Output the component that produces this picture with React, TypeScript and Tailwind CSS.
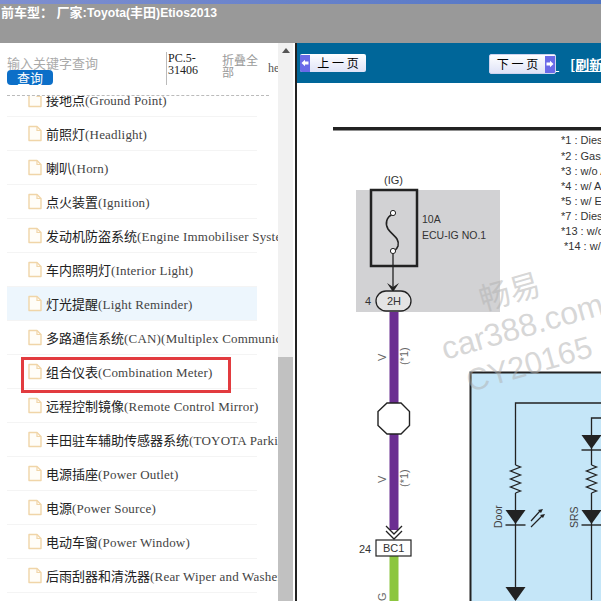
import React from "react";

const rows: [string, string][] = [
  ["接地点", "(Ground Point)"],
  ["前照灯", "(Headlight)"],
  ["喇叭", "(Horn)"],
  ["点火装置", "(Ignition)"],
  ["发动机防盗系统", "(Engine Immobiliser System)"],
  ["车内照明灯", "(Interior Light)"],
  ["灯光提醒", "(Light Reminder)"],
  ["多路通信系统", "(CAN)(Multiplex Communication System)"],
  ["组合仪表", "(Combination Meter)"],
  ["远程控制镜像", "(Remote Control Mirror)"],
  ["丰田驻车辅助传感器系统", "(TOYOTA Parking Assist)"],
  ["电源插座", "(Power Outlet)"],
  ["电源", "(Power Source)"],
  ["电动车窗", "(Power Window)"],
  ["后雨刮器和清洗器", "(Rear Wiper and Washer)"],
];

function FileIcon() {
  return (
    <svg width="16" height="17" viewBox="0 0 16 17" className="shrink-0">
      <path d="M2 1.5H10L14 5.5V15.5H2Z" fill="#fffdf8" stroke="#f0d5a8" strokeWidth="1.4" strokeLinejoin="round" />
      <path d="M10 1.5V5.5H14" fill="none" stroke="#f0d5a8" strokeWidth="1.2" />
    </svg>
  );
}

function Arrow({ dir }: { dir: "l" | "r" }) {
  return (
    <span className="flex h-[17px] w-[10px] shrink-0 items-center justify-center bg-[#6a6ae8]">
      <svg width="8" height="8" viewBox="0 0 8 8">
        <path d={dir === "l" ? "M0.5 4L4 0.8V2.600H7.500V5.400H4V7.200Z" : "M7.500 4L4 0.8V2.600H0.5V5.400H4V7.200Z"} fill="#fff" />
      </svg>
    </span>
  );
}

function Resistor({ x, y }: { x: number; y: number }) {
  return (
    <g>
      <rect x={x - 6} y={y} width="12" height="28" fill="#c5e6f8" />
      <path d={`M${x} ${y}l5 2l-10 4l10 4l-10 4l10 4l-10 4l10 4l-5 2`} fill="none" stroke="#222" strokeWidth="1.3" />
    </g>
  );
}

function Diode({ x, y }: { x: number; y: number }) {
  return (
    <g>
      <path d={`M${x - 10} ${y}H${x + 10}L${x} ${y + 14}Z`} fill="#222" />
      <path d={`M${x - 10} ${y + 15}H${x + 10}`} stroke="#222" strokeWidth="1.4" />
    </g>
  );
}

function Diagram() {
  const f = { fontFamily: "'Liberation Sans',sans-serif" };
  return (
    <svg width="304" height="518" viewBox="297 83 304 518" className="block" style={f}>
      <rect x="333" y="127" width="268" height="3.5" fill="#222" />
      <g fontSize="11" fill="#333">
        <text x="561" y="144">*1 : Dies</text>
        <text x="561" y="160">*2 : Gaso</text>
        <text x="561" y="175">*3 : w/o A</text>
        <text x="561" y="190">*4 : w/ A</text>
        <text x="561" y="205">*5 : w/ E</text>
        <text x="561" y="220">*7 : Dies</text>
        <text x="561" y="235">*13 : w/o</text>
        <text x="564" y="250">*14 : w/</text>
      </g>
      <rect x="356" y="190" width="144" height="122" fill="#d2d2d4" />
      <text x="384" y="184" fontSize="11" fill="#333">(IG)</text>
      <rect x="371" y="190" width="46" height="76" fill="none" stroke="#222" strokeWidth="2.5" />
      <path d="M393 214C386 217 385 224 388 229C392 235 400 238 398 246C397 249 395 250 394 251" fill="none" stroke="#222" strokeWidth="1.6" />
      <circle cx="393" cy="213" r="2.6" fill="#fff" stroke="#222" />
      <circle cx="393" cy="251" r="2.6" fill="#fff" stroke="#222" />
      <path d="M393 254V290" stroke="#222" strokeWidth="1.3" />
      <path d="M387 283L393 292L399 283L393 287Z" fill="#222" />
      <text x="422" y="223" fontSize="10.500" fill="#333">10A</text>
      <text x="422" y="239" fontSize="10.500" fill="#333">ECU-IG NO.1</text>
      <text x="365" y="305" fontSize="11" fill="#333">4</text>
      <rect x="376" y="291" width="35" height="20" rx="10" fill="#e4e4e4" stroke="#222" strokeWidth="1.3" />
      <text x="387" y="305" fontSize="11" fill="#333">2H</text>

      <rect x="389.500" y="312" width="9" height="218" fill="#6b2e91" />
      <rect x="389.500" y="556" width="9" height="45" fill="#8cc63f" />
      <path d="M387 403H401L409.500 411.500V425.500L401 434H387L378 425.500V411.500Z" fill="#fff" stroke="#222" strokeWidth="1.4" />
      <g fontSize="11" fill="#666">
        <text transform="translate(386 361) rotate(-90)">V</text>
        <text transform="translate(386 483) rotate(-90)">V</text>
        <text transform="translate(386 601) rotate(-90)">G</text>
        <text transform="translate(408 365) rotate(-90)">(*1)</text>
        <text transform="translate(408 487) rotate(-90)">(*1)</text>
      </g>
      <path d="M386 526L394 534L402 526M386 531L394 539L402 531" fill="none" stroke="#222" strokeWidth="1.3" />
      <text x="359" y="553" fontSize="11" fill="#333">24</text>
      <rect x="376" y="540" width="35" height="16" fill="#fff" stroke="#222" strokeWidth="1.2" />
      <text x="383" y="552" fontSize="11" fill="#333">BC1</text>

      <rect x="470.500" y="372.500" width="140" height="240" fill="#c5e6f8" stroke="#222" strokeWidth="2" />
      <path d="M515.500 600V403H610M591.500 600V418H610" fill="none" stroke="#222" strokeWidth="1.3" />
      <Resistor x={515.5} y={465} />
      <Resistor x={591.5} y={465} />
      <Diode x={515.5} y={510} />
      <Diode x={591.5} y={510} />
      <Diode x={591.5} y={435} />
      <Diode x={515.5} y={587} />
      <path d="M531 521L540 511M531 527L542 516" stroke="#222" strokeWidth="1.2" />
      <path d="M543 509l-5 1l3 3zM545 514l-5 1l3 3z" fill="#222" />
      <text transform="translate(502 528) rotate(-90)" fontSize="10.500" fill="#444">Door</text>
      <text transform="translate(578 528) rotate(-90)" fontSize="10.500" fill="#444">SRS</text>

      <g fill="#b0b0b0" fillOpacity="0.5">
        <text transform="translate(483 311) rotate(-16)" fontSize="31" fontFamily="'Noto Sans CJK SC',sans-serif">畅易</text>
        <text transform="translate(445 360) rotate(-16)" fontSize="32">car388.com</text>
        <text transform="translate(470 392) rotate(-16)" fontSize="31">CY20165</text>
      </g>
    </svg>
  );
}

export default function App() {
  return (
    <div className="flex h-[601px] w-[601px] flex-col overflow-hidden bg-white font-['Liberation_Serif','Noto_Sans_CJK_SC',serif]">
      <header className="h-[43px] shrink-0 bg-[#999999]">
        <div className="h-[4px] bg-gradient-to-r from-[#7f8fd0] to-[#4f74c4]" />
        <div className="whitespace-nowrap pl-px pt-[1px] font-['Liberation_Sans','Noto_Sans_CJK_SC',sans-serif] text-[13px] font-bold leading-[16px] text-white">
          前车型： 厂家:<span className="text-[12.2px]">Toyota(</span>丰田<span className="text-[12.2px]">)Etios2013</span>
        </div>
      </header>
      <main className="flex min-h-0 flex-1">
        <aside className="relative flex w-[278px] shrink-0 flex-col overflow-hidden">
          <div className="flex h-[52px] shrink-0 items-start">
            <div className="w-[166px] shrink-0 pl-[7px] pt-[12px]">
              <div className="font-['Noto_Sans_CJK_SC',sans-serif] text-[13px] leading-[15px] text-[#aaaaaa]">输入关键字查询</div>
              <button className="block h-[15px] w-[46px] rounded-[4px] bg-[#0c6fc8] font-['Noto_Sans_CJK_SC',sans-serif] text-[13px] leading-[15px] text-white">
                查询
              </button>
            </div>
            <div className="mt-[9px] h-[33px] w-[56px] shrink-0 border-l border-[#bbbbbb] pl-px text-[12px] leading-[12px] text-[#222222]">
              PC.5-<br />31406
            </div>
            <div className="mt-[11px] w-[46px] shrink-0 pr-[9px] font-['Noto_Sans_CJK_SC',sans-serif] text-[12px] leading-[12px] text-[#999999]">
              折叠全部
            </div>
            <div className="mt-[19px] w-[10px] shrink-0 overflow-hidden text-[12px] leading-[12px] text-[#555555]">he</div>
          </div>
          <div className="mx-[7px] w-[262px] border-t border-dashed border-[#bbbbbb]" />
          <div className="min-h-0 flex-1 overflow-hidden">
            <ul className="-mt-[13px]">
              {rows.map(([zh, en]) => (
                <li
                  key={zh}
                  className={`ml-[7px] flex h-[34px] w-[250px] items-center gap-[3px] whitespace-nowrap border-b border-[#f4f4f4] pl-[20px] ${
                    zh === "灯光提醒" ? "bg-[#edf6fd]" : ""
                  }`}
                >
                  <FileIcon />
                  <span className="text-[#444444]">
                    <span className="font-['Noto_Sans_CJK_SC',sans-serif] text-[13px] text-[#222222]">{zh}</span>
                    <span className="text-[13px] tracking-[0.2px]">{en}</span>
                  </span>
                </li>
              ))}
            </ul>
          </div>
          <div className="pointer-events-none absolute left-[21px] top-[314px] h-[36px] w-[210px] border-[3px] border-[#e23b3f]" />
        </aside>
        <div className="flex w-[15px] shrink-0 flex-col bg-[#f1f1f1]">
          <div className="flex h-[14px] items-center justify-center">
            <div className="h-0 w-0 border-x-[4px] border-b-[5px] border-x-transparent border-b-[#555555]" />
          </div>
          <div className="mt-[300px] flex-1 bg-[#c1c1c1]" />
        </div>
        <div className="w-[2px] shrink-0 bg-white" />
        <div className="w-[2px] shrink-0 bg-[#222222]" />
        <section className="flex min-w-0 flex-1 flex-col overflow-hidden">
          <nav className="flex h-[40px] shrink-0 items-start bg-[#006699] pt-[11px] font-['Noto_Sans_CJK_SC',sans-serif] text-[12px]">
            <button className="ml-[3px] flex h-[18px] w-[66px] shrink-0 items-center overflow-hidden rounded-[2px] bg-gradient-to-b from-white to-[#dfe3f7] text-black">
              <Arrow dir="l" />
              <span className="flex-1 text-center">上 一 页</span>
            </button>
            <button className="ml-[123px] flex h-[20px] w-[67px] shrink-0 items-center overflow-hidden rounded-[2px] border border-[#cfd3ee] bg-gradient-to-b from-white to-[#dfe3f7] text-black">
              <span className="flex-1 text-center">下 一 页</span>
              <Arrow dir="r" />
            </button>
            <span className="w-[4px] shrink-0 whitespace-pre text-[14px] leading-[20px] text-white underline"> </span>
            <span className="ml-[10px] shrink-0 whitespace-pre text-[14px] font-bold leading-[20px] text-white underline">[刷新</span>
          </nav>
          <Diagram />
        </section>
      </main>
    </div>
  );
}
